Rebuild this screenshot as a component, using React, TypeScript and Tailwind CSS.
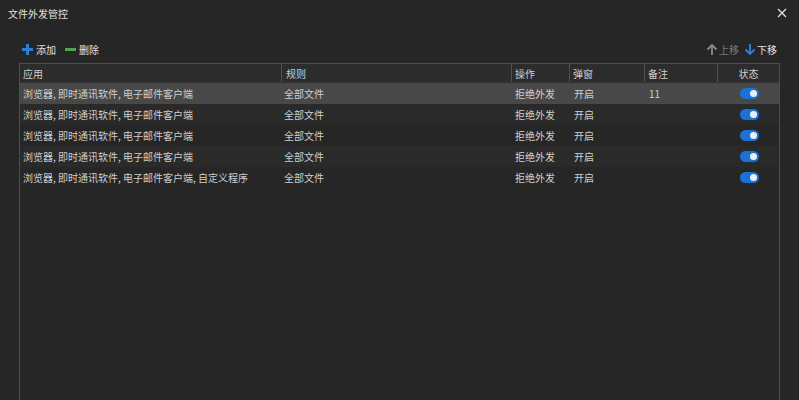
import React from 'react';

const COLS = [
  { key: 'app', title: '应用', w: 'w-[262px]', pl: 'pl-[3px]' },
  { key: 'rule', title: '规则', w: 'w-[230px]', pl: 'pl-[4px]' },
  { key: 'op', title: '操作', w: 'w-[58px]', pl: 'pl-[3px]' },
  { key: 'popup', title: '弹窗', w: 'w-[75px]', pl: 'pl-[3px]' },
  { key: 'note', title: '备注', w: 'w-[73px]', pl: 'pl-[3px]' },
];

const ROWS = [
  { app: '浏览器, 即时通讯软件, 电子邮件客户端', rule: '全部文件', op: '拒绝外发', popup: '开启', note: '11' },
  { app: '浏览器, 即时通讯软件, 电子邮件客户端', rule: '全部文件', op: '拒绝外发', popup: '开启', note: '' },
  { app: '浏览器, 即时通讯软件, 电子邮件客户端', rule: '全部文件', op: '拒绝外发', popup: '开启', note: '' },
  { app: '浏览器, 即时通讯软件, 电子邮件客户端', rule: '全部文件', op: '拒绝外发', popup: '开启', note: '' },
  { app: '浏览器, 即时通讯软件, 电子邮件客户端, 自定义程序', rule: '全部文件', op: '拒绝外发', popup: '开启', note: '' },
];

function Toggle() {
  return (
    <div className="w-[19px] h-[11px] rounded-full bg-[#1a72d6] flex items-center justify-end pr-[2px]">
      <div className="w-[7px] h-[7px] rounded-full bg-[#e8f0fa]" />
    </div>
  );
}

export default function App() {
  const [selected, setSelected] = React.useState(0);

  return (
    <div
      className="w-[799px] h-[400px] bg-[#262626] text-[#cfcfcf] flex flex-col overflow-hidden"
      style={{ fontFamily: '"Noto Sans CJK SC", "Noto Sans", sans-serif' }}
    >
      <div className="h-[26px] flex items-center justify-between pl-[8px] pr-[12px]">
        <span className="text-[10px] text-[#e0e0e0]">文件外发管控</span>
        <svg width="10" height="10" viewBox="0 0 10 10" className="text-[#e6e6e6]">
          <path d="M1 1 L9 9 M9 1 L1 9" stroke="currentColor" strokeWidth="1.2" />
        </svg>
      </div>

      <div className="h-[20px] mt-[13px] flex items-center justify-between pl-[21px] pr-[22px] text-[10px]">
        <div className="flex items-center gap-[8px]">
          <button className="flex items-center gap-[2px] text-[#e0e0e0]">
            <svg width="13" height="13" viewBox="0 0 13 13">
              <path d="M6.5 1 V12 M1 6.5 H12" stroke="#2a7fd4" strokeWidth="3" />
            </svg>
            添加
          </button>
          <button className="flex items-center gap-[2px] text-[#e0e0e0]">
            <svg width="13" height="13" viewBox="0 0 13 13">
              <path d="M1 6.5 H12" stroke="#4fa64f" strokeWidth="3" />
            </svg>
            删除
          </button>
        </div>
        <div className="flex items-center gap-[5px]">
          <button className="flex items-center gap-[1px] text-[#7a7a7a]">
            <svg width="12" height="13" viewBox="0 0 12 13">
              <path d="M6 12 V2 M1.5 6.5 L6 2 L10.5 6.5" stroke="#8a8a8a" strokeWidth="1.8" fill="none" />
            </svg>
            上移
          </button>
          <button className="flex items-center gap-[1px] text-[#e0e0e0]">
            <svg width="12" height="13" viewBox="0 0 12 13">
              <path d="M6 1 V11 M1.5 6.5 L6 11 L10.5 6.5" stroke="#2a82e0" strokeWidth="1.8" fill="none" />
            </svg>
            下移
          </button>
        </div>
      </div>

      <div className="flex-1 mt-[4px] mx-[19px] border border-[#4e4e4e] border-b-0 bg-[#262626] flex flex-col">
        <div className="h-[19px] flex items-stretch bg-[#2c2c2c] border-b border-[#333333] text-[10px]">
          {COLS.map((c) => (
            <div key={c.key} className={`${c.w} ${c.pl} flex items-center border-r border-[#505050]`}>
              {c.title}
            </div>
          ))}
          <div className="flex-1 flex items-center justify-center">状态</div>
        </div>

        {ROWS.map((r, i) => (
          <div
            key={i}
            onClick={() => setSelected(i)}
            className={`h-[21px] flex items-center text-[10px] ${
              selected === i ? 'bg-[#484848]' : i % 2 === 1 ? 'bg-[#2a2a2a]' : 'bg-[#262626]'
            }`}
          >
            <div className="w-[262px] pl-[3px] truncate">{r.app}</div>
            <div className="w-[230px] pl-[2px]">{r.rule}</div>
            <div className="w-[58px] pl-[3px]">{r.op}</div>
            <div className="w-[75px] pl-[4px]">{r.popup}</div>
            <div className="w-[73px] pl-[4px]">{r.note}</div>
            <div className="flex-1 flex justify-center pl-[2px]">
              <Toggle />
            </div>
          </div>
        ))}
      </div>
    </div>
  );
}
